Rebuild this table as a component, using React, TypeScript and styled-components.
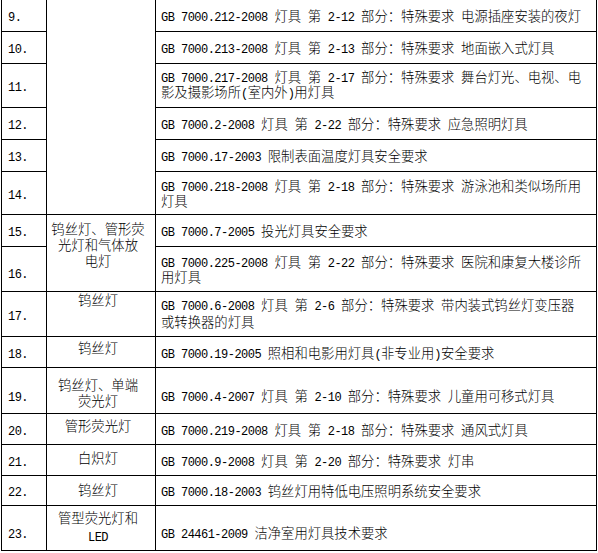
import React from 'react';
import styled, { createGlobalStyle } from 'styled-components';

const GlobalStyle = createGlobalStyle`
  html, body { margin: 0; padding: 0; background: #ffffff; }
  body { font-family: "Noto Sans CJK SC", sans-serif; color: #000; }
`;

const Page = styled.div`
  width: 598px;
  height: 553px;
  overflow: hidden;
  background: #ffffff;
  padding-left: 1px;
  box-sizing: border-box;
`;

const Table = styled.table`
  border-collapse: collapse;
  table-layout: fixed;
  width: 595px;
  margin-top: -1px;
  font-family: "Noto Sans CJK SC", sans-serif;
  font-size: 13.33px;
  font-weight: 300;
  color: #000;
`;

const Row = styled.tr<{ $h: number }>`
  height: ${(p) => p.$h}px;
`;

const Cell = styled.td<{ $shift?: number }>`
  border: 1px solid #000;
  padding: 0;
  white-space: nowrap;
  vertical-align: middle;
  padding-top: ${(p) => (p.$shift && p.$shift > 0 ? p.$shift * 2 : 0)}px;
  padding-bottom: ${(p) => (p.$shift && p.$shift < 0 ? -p.$shift * 2 : 0)}px;
`;

const NumCell = styled(Cell)`
  padding-left: 6px;
  text-align: left;
`;

const CatCell = styled.td<{ $top: number }>`
  border: 1px solid #000;
  border-top: ${(p) => (p.$top < 0 ? 'none' : '1px solid #000')};
  padding: ${(p) => Math.max(p.$top, 0)}px 8px 0 2px;
  white-space: nowrap;
  vertical-align: top;
  text-align: center;
`;

const StdCell = styled(Cell)`
  padding-left: 5px;
  text-align: left;
`;

const Line = styled.div<{ $lh: number }>`
  line-height: ${(p) => p.$lh}px;
  height: ${(p) => p.$lh}px;
`;

const Latin = styled.span`
  font-family: "Liberation Mono", monospace;
  font-size: 12px;
  font-weight: 400;
  letter-spacing: -0.53px;
`;

function Mixed({ text }: { text: string }) {
  const parts = text.split(/([\x20-\x7E]+)/).filter((s) => s.length > 0);
  return (
    <>
      {parts.map((s, i) =>
        /^[\x20-\x7E]+$/.test(s) ? <Latin key={i}>{s}</Latin> : <React.Fragment key={i}>{s}</React.Fragment>
      )}
    </>
  );
}

type Cat = { lines: string[]; span: number; top: number; lh: number } | null;

type RowData = {
  n: string;
  h: number;
  std: string[];
  lh: number;
  numShift?: number;
  stdShift?: number;
  cat: Cat;
};

const rows: RowData[] = [
  { n: '9.', h: 32, lh: 15, std: ['GB 7000.212-2008 灯具 第 2-12 部分：特殊要求 电源插座安装的夜灯'], cat: { lines: [], span: 6, top: -1, lh: 16 } },
  { n: '10.', h: 32, lh: 15, std: ['GB 7000.213-2008 灯具 第 2-13 部分：特殊要求 地面嵌入式灯具'], cat: null },
  {
    n: '11.',
    h: 44,
    lh: 15,
    stdShift: -2,
    std: ['GB 7000.217-2008 灯具 第 2-17 部分：特殊要求 舞台灯光、电视、电', '影及摄影场所(室内外)用灯具'],
    cat: null,
  },
  { n: '12.', h: 32, lh: 15, std: ['GB 7000.2-2008 灯具 第 2-22 部分：特殊要求 应急照明灯具'], cat: null },
  { n: '13.', h: 32, lh: 15, std: ['GB 7000.17-2003 限制表面温度灯具安全要求'], cat: null },
  { n: '14.', h: 43, lh: 15, std: ['GB 7000.218-2008 灯具 第 2-18 部分：特殊要求 游泳池和类似场所用', '灯具'], cat: null },
  {
    n: '15.',
    h: 32,
    lh: 15,
    std: ['GB 7000.7-2005 投光灯具安全要求'],
    cat: { lines: ['钨丝灯、管形荧', '光灯和气体放', '电灯'], span: 2, top: 6, lh: 16 },
  },
  { n: '16.', h: 45, lh: 15, numShift: 3, std: ['GB 7000.225-2008 灯具 第 2-22 部分：特殊要求 医院和康复大楼诊所', '用灯具'], cat: null },
  {
    n: '17.',
    h: 45,
    lh: 17,
    stdShift: -1,
    std: ['GB 7000.6-2008 灯具 第 2-6 部分：特殊要求 带内装式钨丝灯变压器', '或转换器的灯具'],
    cat: { lines: ['钨丝灯'], span: 1, top: 0, lh: 16 },
  },
  { n: '18.', h: 31, lh: 15, std: ['GB 7000.19-2005 照相和电影用灯具(非专业用)安全要求'], cat: { lines: ['钨丝灯'], span: 1, top: 3, lh: 16 } },
  {
    n: '19.',
    h: 46,
    lh: 15,
    numShift: 5,
    stdShift: 5,
    std: ['GB 7000.4-2007 灯具 第 2-10 部分：特殊要求 儿童用可移式灯具'],
    cat: { lines: ['钨丝灯、单端', '荧光灯'], span: 1, top: 9, lh: 16 },
  },
  { n: '20.', h: 31, lh: 15, std: ['GB 7000.219-2008 灯具 第 2-18 部分：特殊要求 通风式灯具'], cat: { lines: ['管形荧光灯'], span: 1, top: 4, lh: 16 } },
  { n: '21.', h: 31, lh: 15, std: ['GB 7000.9-2008 灯具 第 2-20 部分：特殊要求 灯串'], cat: { lines: ['白炽灯'], span: 1, top: 5, lh: 16 } },
  { n: '22.', h: 30, lh: 15, std: ['GB 7000.18-2003 钨丝灯用特低电压照明系统安全要求'], cat: { lines: ['钨丝灯'], span: 1, top: 6, lh: 16 } },
  {
    n: '23.',
    h: 45,
    lh: 15,
    numShift: 4,
    stdShift: 4,
    std: ['GB 24461-2009 洁净室用灯具技术要求'],
    cat: { lines: ['管型荧光灯和', 'LED'], span: 1, top: 3, lh: 18 },
  },
];

export default function App() {
  return (
    <Page>
      <GlobalStyle />
      <Table>
        <colgroup>
          <col style={{ width: 45 }} />
          <col style={{ width: 109 }} />
          <col style={{ width: 441 }} />
        </colgroup>
        <tbody>
          {rows.map((r) => (
            <Row key={r.n} $h={r.h}>
              <NumCell $shift={r.numShift}>
                <Mixed text={r.n} />
              </NumCell>
              {r.cat && (
                <CatCell rowSpan={r.cat.span} $top={r.cat.top}>
                  {r.cat.lines.map((l, i) => (
                    <Line key={i} $lh={r.cat!.lh}>
                      <Mixed text={l} />
                    </Line>
                  ))}
                </CatCell>
              )}
              <StdCell $shift={r.stdShift}>
                {r.std.map((l, i) => (
                  <Line key={i} $lh={r.lh}>
                    <Mixed text={l} />
                  </Line>
                ))}
              </StdCell>
            </Row>
          ))}
        </tbody>
      </Table>
    </Page>
  );
}
